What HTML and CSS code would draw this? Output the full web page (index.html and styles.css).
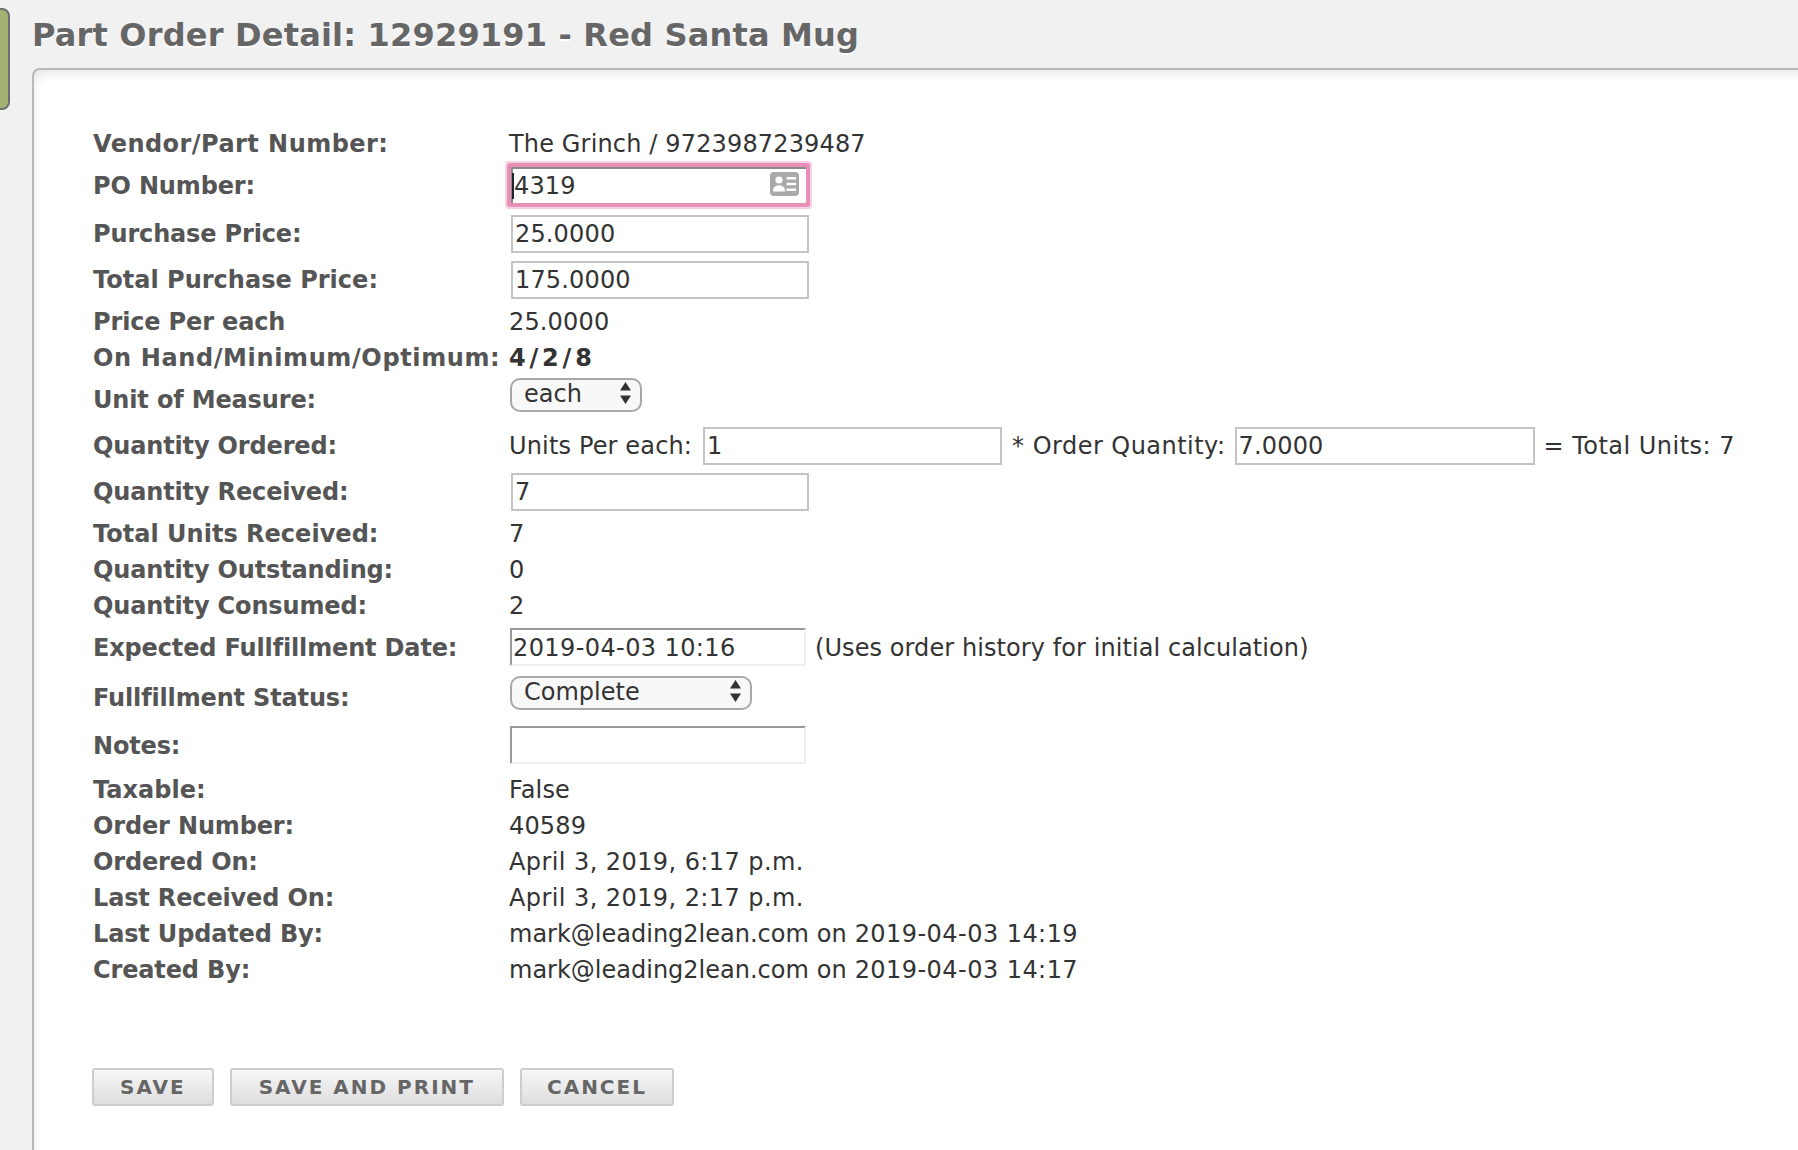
FILE: index.html
```html
<!DOCTYPE html>
<html lang="en">
<head>
<meta charset="utf-8">
<title>Part Order Detail</title>
<link rel="stylesheet" href="styles.css">
</head>
<body>
<div class="side-tab"></div>
<h1 class="page-title">Part Order Detail: 12929191 - Red Santa Mug</h1>
<main class="panel">
  <form class="order-form">
    <table class="detail-table">
      <tbody>
        <tr class="r-text"><th class="wide">Vendor/Part Number:</th><td>The Grinch / 9723987239487</td></tr>
        <tr class="r-po"><th>PO Number:</th><td>
          <span class="focus-wrap">
            <input class="field field-focus" type="text" value="4319">
            <span class="caret"></span>
            <svg class="card-icon" viewBox="0 0 29 24" aria-hidden="true">
              <rect width="29" height="24" rx="4" fill="#a9a9a9"/>
              <circle cx="9" cy="8" r="3.6" fill="#fff"/>
              <path d="M3 19.500c0-4.200 2.400-6.300 6-6.300s6 2.100 6 6.300z" fill="#fff"/>
              <path d="M16.500 5h9.500v2.400h-9.500zM16.500 10.800h9.500v2.400h-9.500zM16.500 16.600h9.500v2.400h-9.500z" fill="#fff"/>
            </svg>
          </span>
        </td></tr>
        <tr class="r-input r-price"><th>Purchase Price:</th><td><input class="field" type="text" value="25.0000"></td></tr>
        <tr class="r-input"><th class="t-lead">Total Purchase Price:</th><td><input class="field" type="text" value="175.0000"></td></tr>
        <tr class="r-text"><th>Price Per each</th><td>25.0000</td></tr>
        <tr class="r-text"><th class="wider">On Hand/Minimum/Optimum:</th><td class="strong">4/2/8</td></tr>
        <tr class="r-select"><th>Unit of Measure:</th><td>
          <span class="select-wrap">
            <select class="picker picker-unit"><option>each</option></select>
            <svg class="updown" viewBox="0 0 11 22" aria-hidden="true"><path d="M5.500 0l5.500 8.500h-11zM5.500 22l5.500-8.500h-11z" fill="#333"/></svg>
          </span>
        </td></tr>
        <tr class="r-qty"><th>Quantity Ordered:</th><td><span class="drop">Units Per each:</span><input class="field field-units" type="text" value="1"><span class="note-wide note-order">* Order Quantity:</span><input class="field field-order" type="text" value="7.0000"><span class="note-wide note-total">= Total Units: 7</span></td></tr>
        <tr class="r-input"><th>Quantity Received:</th><td><input class="field" type="text" value="7"></td></tr>
        <tr class="r-text"><th class="t-lead">Total Units Received:</th><td>7</td></tr>
        <tr class="r-text"><th>Quantity Outstanding:</th><td>0</td></tr>
        <tr class="r-text"><th>Quantity Consumed:</th><td>2</td></tr>
        <tr class="r-input r-expected"><th>Expected Fullfillment Date:</th><td><input class="field field-inset field-date" type="text" value="2019-04-03 10:16"><span class="note">(Uses order history for initial calculation)</span></td></tr>
        <tr class="r-status"><th>Fullfillment Status:</th><td>
          <span class="select-wrap">
            <select class="picker picker-status"><option>Complete</option></select>
            <svg class="updown" viewBox="0 0 11 22" aria-hidden="true"><path d="M5.500 0l5.500 8.500h-11zM5.500 22l5.500-8.500h-11z" fill="#333"/></svg>
          </span>
        </td></tr>
        <tr class="r-notes"><th>Notes:</th><td><input class="field field-inset" type="text"></td></tr>
        <tr class="r-text"><th class="t-lead">Taxable:</th><td>False</td></tr>
        <tr class="r-text"><th>Order Number:</th><td>40589</td></tr>
        <tr class="r-text"><th>Ordered On:</th><td class="date-val">April 3, 2019, 6:17 p.m.</td></tr>
        <tr class="r-text"><th>Last Received On:</th><td class="date-val">April 3, 2019, 2:17 p.m.</td></tr>
        <tr class="r-text"><th>Last Updated By:</th><td><span class="email">mark@leading2lean.com</span> on <span class="stamp">2019-04-03 14:19</span></td></tr>
        <tr class="r-text"><th>Created By:</th><td><span class="email">mark@leading2lean.com</span> on <span class="stamp">2019-04-03 14:17</span></td></tr>
      </tbody>
    </table>
    <div class="actions">
      <button class="btn" type="button">Save</button>
      <button class="btn btn-wide" type="button">Save and Print</button>
      <button class="btn btn-narrow" type="button">Cancel</button>
    </div>
  </form>
</main>
</body>
</html>
```
FILE: styles.css
```css
* { box-sizing: border-box; }
html, body { margin: 0; height: 100%; }
body {
  background: #f1f1f1;
  font-family: "DejaVu Sans", Verdana, sans-serif;
  color: #333;
  overflow: hidden;
  position: relative;
  padding-left: 32px;
}
.side-tab {
  position: absolute;
  left: -10px;
  top: 8px;
  width: 20px;
  height: 102px;
  background: #a3b271;
  border: 2px solid #6d6d6d;
  border-radius: 8px;
}
.page-title {
  margin: 0;
  height: 68px;
  padding-top: 15px;
  font-size: 32px;
  line-height: 40px;
  font-weight: bold;
  letter-spacing: 0.19px;
  color: #666;
  text-shadow: 0 2px 1px #fff;
  white-space: nowrap;
}
.panel {
  height: 1082px;
  margin-right: -40px;
  background: #fff;
  border: 2px solid #b9b9b9;
  border-right: 0;
  border-bottom: 0;
  border-top-left-radius: 8px;
  box-shadow: inset 4px 8px 14px -8px #d8d8d8;
  padding: 55px 0 0 59px;
}
.detail-table {
  border-collapse: collapse;
  font-size: 24px;
  line-height: 28px;
}
.detail-table th {
  width: 416px;
  padding: 0;
  text-align: left;
  font-weight: bold;
  letter-spacing: -0.15px;
  color: #555;
  white-space: nowrap;
}
.detail-table th.wide { letter-spacing: 0.45px; }
.detail-table th.wider { letter-spacing: 0.62px; }
.detail-table th.t-lead { letter-spacing: 0.02px; }
.detail-table td {
  padding: 0;
  letter-spacing: 0.15px;
  white-space: nowrap;
}
.detail-table td.date-val { letter-spacing: 0.42px; }
.detail-table td.strong { font-weight: bold; letter-spacing: 3.8px; }
.email { letter-spacing: 0; }
.stamp { letter-spacing: 0.45px; }
.drop { vertical-align: -1px; }
.r-text { height: 36px; }
.r-text th, .r-text td { padding-top: 2px; }
.r-po { height: 48px; }
.r-po th { padding-top: 2px; }
.r-input { height: 47px; }
.r-input th { padding-top: 1px; }
.detail-table .r-price th, .detail-table .r-price td { padding-top: 2px; }
.detail-table .r-expected th { padding-top: 3px; }
.r-select { height: 47px; }
.r-qty { height: 46px; }
.r-qty th, .r-qty td { padding-top: 2px; }
.r-status { height: 50px; }
.r-notes { height: 51px; }
.detail-table .r-notes td { padding-bottom: 2px; }
.detail-table .r-select th { padding-top: 2px; }
.detail-table .r-select td { padding-bottom: 7px; }
.detail-table .r-status th { padding-top: 5px; }
.detail-table .r-status td { padding-bottom: 5px; }
.field {
  width: 298px;
  height: 38px;
  margin-left: 2px;
  padding: 0 2px;
  border: 2px solid #c4c4c4;
  background: #fff;
  font: inherit;
  letter-spacing: 0.15px;
  color: #333;
  vertical-align: middle;
}
.field-inset {
  width: 296px;
  margin-left: 1px;
  padding: 0 1px;
  border-color: #999 #eee #eee #999;
}
.field-date { letter-spacing: 0.4px; padding-top: 2px; }
.field-units { width: 299px; margin-left: 11px; }
.field-order { width: 300px; margin-left: 9px; }
.note { margin-left: 9px; letter-spacing: 0.08px; vertical-align: -2px; }
.note-wide { letter-spacing: 0.47px; vertical-align: -1px; }
.note-order { margin-left: 10px; }
.note-total { margin-left: 9px; }
.focus-wrap {
  display: inline-block;
  position: relative;
  vertical-align: middle;
  margin-left: 2px;
}
.field-focus {
  display: block;
  width: 295px;
  height: 36px;
  margin: 0;
  padding: 0 0 0 1px;
  border: 0;
  border-top: 2px solid #8a8a8a;
  border-left: 2px solid #8a8a8a;
  box-shadow: 0 0 0 4px #e78fb6, 0 0 0 6px #f6d2e2;
  border-radius: 1px;
  outline: none;
}
.caret {
  position: absolute;
  left: 1px;
  top: 6px;
  width: 2px;
  height: 26px;
  background: #1c2430;
}
.card-icon {
  position: absolute;
  left: 259px;
  top: 5px;
  width: 29px;
  height: 24px;
}
.select-wrap {
  display: inline-block;
  position: relative;
  margin-left: 1px;
  vertical-align: middle;
}
.picker {
  display: block;
  appearance: none;
  -webkit-appearance: none;
  height: 34px;
  padding: 0 0 2px 12px;
  border: 2px solid #a8a8a8;
  border-radius: 10px;
  background: #f8f8f8;
  font: inherit;
  line-height: 28px;
  color: #333;
}
.picker-unit { width: 132px; }
.picker-status { width: 242px; }
.updown {
  position: absolute;
  right: 11px;
  top: 4px;
  width: 11px;
  height: 22px;
  pointer-events: none;
}
.actions {
  display: flex;
  gap: 16px;
  margin: 81px 0 0 -1px;
}
.btn {
  height: 38px;
  padding: 0 26px;
  border: 2px solid #cdcdcd;
  border-radius: 3px;
  background: linear-gradient(#f7f7f7, #dedede);
  font-family: inherit;
  font-size: 20px;
  font-weight: bold;
  letter-spacing: 2px;
  text-transform: uppercase;
  color: #666;
}
.btn-wide { padding: 0 27px; }
.btn-narrow { padding: 0 25px; }
```
